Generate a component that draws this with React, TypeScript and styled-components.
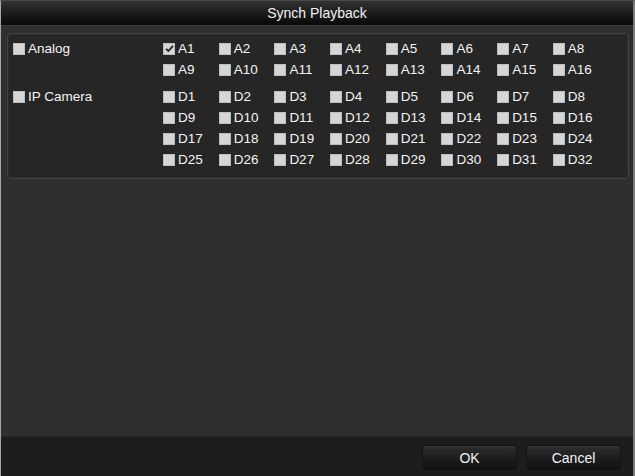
import React from 'react';
import styled, { createGlobalStyle } from 'styled-components';

const GlobalStyle = createGlobalStyle`
  html, body {
    margin: 0;
    padding: 0;
    background: #2e2e2e;
  }
  body {
    font-family: 'Liberation Sans', Arial, sans-serif;
  }
`;

const Window = styled.div`
  width: 635px;
  height: 476px;
  box-sizing: border-box;
  display: flex;
  flex-direction: column;
  background: #2f2f2f;
  border-left: 1px solid #a8a8a8;
  border-right: 2px solid #7a7a7a;
  border-top: 1px solid #4a4a4a;
  color: #fff;
  font-size: 13.5px;
`;

const TitleBar = styled.div`
  height: 24px;
  display: flex;
  align-items: center;
  justify-content: center;
  background: linear-gradient(#333 0%, #1f1f1f 45%, #080808 100%);
  border-bottom: 1px solid #3a3a3a;
  font-size: 14px;
  color: #f2f2f2;
`;

const Body = styled.div`
  flex: 1;
  padding: 7px 4px 0 6px;
`;

const GroupBox = styled.div`
  border: 1px solid #444;
  border-radius: 4px;
  background: #262626;
  padding: 4px 0 8px 5px;
  box-shadow: inset 0 0 0 1px #2b2b2b;
`;

const Section = styled.div<{ $gap?: number }>`
  display: grid;
  grid-template-columns: 150px repeat(8, 55.7px);
  grid-auto-rows: 21px;
  margin-top: ${(p) => p.$gap ?? 0}px;
`;

const Item = styled.label<{ $col?: number }>`
  display: flex;
  align-items: center;
  gap: 3px;
  white-space: nowrap;
  color: #f4f4f4;
  ${(p) => (p.$col ? `grid-column: ${p.$col};` : '')}
`;

const Box = styled.span`
  width: 12px;
  height: 12px;
  box-sizing: border-box;
  background: #d6d6d6;
  border: 1px solid #bdbdbd;
  display: inline-flex;
  align-items: center;
  justify-content: center;
  flex: none;
`;

const Footer = styled.div`
  height: 40px;
  background: #1d1d1d;
  border-top: 1px solid #262626;
  display: flex;
  justify-content: flex-end;
  align-items: flex-start;
  gap: 9px;
  padding: 8px 12px 0 0;
  box-sizing: border-box;
`;

const Button = styled.button`
  width: 95px;
  height: 25px;
  border-radius: 3px;
  border: 1px solid #121212;
  background: linear-gradient(#2e2e2e, #1b1b1b 60%, #121212);
  box-shadow: inset 0 1px 0 #3a3a3a;
  color: #f2f2f2;
  font-family: 'Liberation Sans', Arial, sans-serif;
  font-size: 14px;
  padding: 0;
`;

const Check = ({ checked }: { checked?: boolean }) => (
  <Box>
    {checked && (
      <svg width="9" height="9" viewBox="0 0 9 9">
        <path d="M1 4.8 L3.4 7 L8 1.8" stroke="#222" strokeWidth="1.8" fill="none" />
      </svg>
    )}
  </Box>
);

const range = (prefix: string, from: number, to: number) =>
  Array.from({ length: to - from + 1 }, (_, i) => `${prefix}${from + i}`);

const ChannelGroup = ({
  label,
  channels,
  gap,
  checked = [],
}: {
  label: string;
  channels: string[];
  gap?: number;
  checked?: string[];
}) => (
  <Section $gap={gap}>
    <Item>
      <Check />
      {label}
    </Item>
    {channels.map((c, i) => (
      <Item key={c} $col={i % 8 === 0 ? 2 : undefined}>
        <Check checked={checked.includes(c)} />
        {c}
      </Item>
    ))}
  </Section>
);

const App = () => (
  <>
    <GlobalStyle />
    <Window>
      <TitleBar>Synch Playback</TitleBar>
      <Body>
        <GroupBox>
          <ChannelGroup label="Analog" channels={range('A', 1, 16)} checked={['A1']} />
          <ChannelGroup label="IP Camera" channels={range('D', 1, 32)} gap={6} />
        </GroupBox>
      </Body>
      <Footer>
        <Button>OK</Button>
        <Button>Cancel</Button>
      </Footer>
    </Window>
  </>
);

export default App;
